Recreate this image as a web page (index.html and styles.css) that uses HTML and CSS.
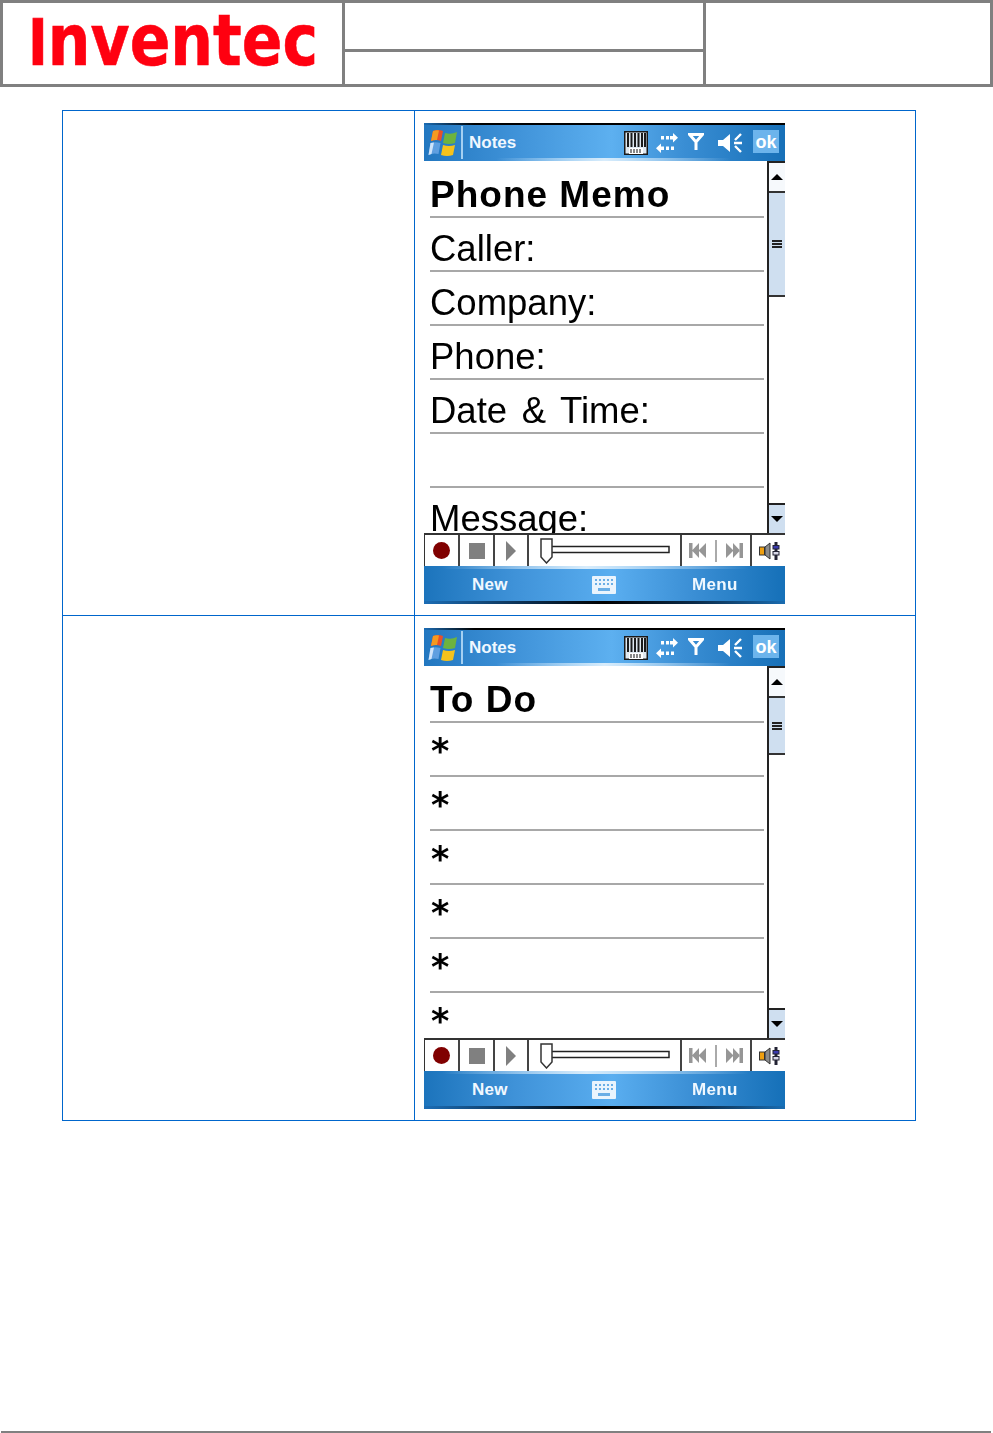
FILE: index.html

```html
<!DOCTYPE html>
<html lang="en">
<head>
    <meta charset="UTF-8">
    <meta name="viewport" content="width=device-width, initial-scale=1.0">
    <title>Inventec - Notes templates</title>
    <link rel="stylesheet" href="styles.css">
</head>
<body>
    <!-- Shared icons for the two phone screens -->
    <svg class="icon-defs" aria-hidden="true">
        <symbol id="i-flag" viewBox="0 0 30 30">
            <path d="M5 3 Q10 1 15 3 L13 13 Q8 11 3 13 Z" fill="#e8502a"/>
            <path d="M5 3 Q8 2 11 2.500 L9 12 Q6 11.500 3 13 Z" fill="#f59a20"/>
            <path d="M17 5 Q23 7 29 4 L27 15 Q21 17 15 15 Z" fill="#6db33f"/>
            <path d="M2.500 15 Q7 13.500 12.500 15 L10.500 26 Q5 24.500 0.500 27 Z" fill="#5f9fe0"/>
            <path d="M2.500 15 L6 14.500 L3.500 26 L0.500 27 Z" fill="#cfe4fa"/>
            <path d="M15 17 Q21 19 27 17 L25 27 Q19 29 13 27 Z" fill="#f6c21c"/>
        </symbol>
        <symbol id="i-barcode" viewBox="0 0 24 24">
            <rect x="0.750" y="0.750" width="22.500" height="22.500" fill="#dfe8f0" stroke="#1a1a1a" stroke-width="1.500"/>
            <path d="M4 2v14M7.500 2v14M11 2v14M14.500 2v14M18 2v14M21 2v14" stroke="#1a1a1a" stroke-width="2"/>
            <rect x="5" y="17" width="14" height="6" fill="#fff"/>
            <path d="M7 18v4M10 18v4M13 18v4M16 18v4" stroke="#111"/>
        </symbol>
        <symbol id="i-sync" viewBox="0 0 22 20">
            <g fill="#fff">
                <path d="M5 3h3v3.500H5zM10 3h3v3.500h-3zM14 3h3V0l5 4.750-5 4.750V6.500h-3z"/>
                <path d="M10 13.500h3v3.500h-3zM15 13.500h3v3.500h-3zM8 13.500v3.500H5V20L0 15.250 5 10.500v3z"/>
            </g>
        </symbol>
        <symbol id="i-antenna" viewBox="0 0 16 17">
            <path d="M1.500 1.500h13L8 9zM8 9v8" fill="none" stroke="#fff" stroke-width="3"/>
        </symbol>
        <symbol id="i-mute" viewBox="0 0 24 20">
            <path d="M0 7h5l7-6v18l-7-6H0z" fill="#fff"/>
            <path d="M23 1l-6 6M16 10h8M17 13l6 6" stroke="#fff" stroke-width="2.400" fill="none"/>
        </symbol>
        <symbol id="i-keyboard" viewBox="0 0 24 18">
            <rect width="24" height="18" rx="1" fill="#eaf4fd"/>
            <path d="M3 3h2v2H3zM7 3h2v2H7zM11 3h2v2h-2zM15 3h2v2h-2zM19 3h2v2h-2zM3 7h2v2H3zM7 7h2v2H7zM11 7h2v2h-2zM15 7h2v2h-2zM19 7h2v2h-2zM6 12h12v3H6z" fill="#6aaee6"/>
        </symbol>
        <symbol id="i-slider" viewBox="0 0 130 26">
            <rect x="10" y="8.500" width="119" height="6" fill="#fff" stroke="#222" stroke-width="1.500"/>
            <path d="M1 1h11v18l-5.500 6L1 19z" fill="#fff" stroke="#333" stroke-width="1.500"/>
        </symbol>
        <symbol id="i-prev" viewBox="0 0 17 17">
            <path d="M0 1h3.500v15H0zM10 1v15L3 8.500zM17 1v15L9.500 8.500z" fill="#969696"/>
        </symbol>
        <symbol id="i-next" viewBox="0 0 17 17">
            <path d="M0 1v15l7.500-7.500zM7 1v15l7-7.500zM13.500 1H17v15h-3.500z" fill="#969696"/>
        </symbol>
        <symbol id="i-volume" viewBox="0 0 22 18">
            <rect x="0.500" y="5" width="5" height="8" fill="#f0a010" stroke="#333"/>
            <path d="M6 5l5-4v16l-5-4z" fill="#8c8c8c" stroke="#333"/>
            <path d="M17 0v18" stroke="#223" stroke-width="3"/>
            <rect x="14" y="3.500" width="6" height="3.500" fill="#3a3ab0" stroke="#223"/>
            <rect x="14" y="9.500" width="6" height="3.500" fill="#d8d8e8" stroke="#223"/>
        </symbol>
    </svg>

    <div class="page">
        <!-- Document header -->
        <header class="doc-header">
            <div class="logo-cell">
                <svg class="logo" viewBox="0 0 285 47" role="img" aria-label="Inventec">
                    <text class="logo-text" x="-3" y="47" textLength="290" lengthAdjust="spacingAndGlyphs"><tspan class="logo-cap">I</tspan>nventec</text>
                </svg>
            </div>
            <div class="title-cell"></div>
            <div class="rev-cell"></div>
            <div class="sub-cell"></div>
        </header>

        <!-- Template table -->
        <main class="template-table">
            <div class="label-cell"></div>
            <div class="shot-cell">
                <div class="screen">
                    <div class="status">
                        <svg class="flag"><use href="#i-flag"/></svg>
                        <span class="status-sep"></span>
                        <span class="app-title">Notes</span>
                        <svg class="ic-barcode"><use href="#i-barcode"/></svg>
                        <svg class="ic-sync"><use href="#i-sync"/></svg>
                        <svg class="ic-antenna"><use href="#i-antenna"/></svg>
                        <svg class="ic-mute"><use href="#i-mute"/></svg>
                        <span class="ok-btn">ok</span>
                    </div>
                    <div class="note-area">
                        <div class="note-lines">
                            <div class="note-row note-head">Phone Memo</div>
                            <div class="note-row">Caller:</div>
                            <div class="note-row">Company:</div>
                            <div class="note-row">Phone:</div>
                            <div class="note-row">Date &amp; Time:</div>
                            <div class="note-row"></div>
                            <div class="note-row">Message:</div>
                        </div>
                        <div class="scrollbar">
                            <div class="sb-up"></div>
                            <div class="sb-thumb sb-thumb-long"><span class="sb-grip"></span></div>
                            <div class="sb-track"></div>
                            <div class="sb-down"></div>
                        </div>
                    </div>
                    <div class="player">
                        <div class="pl-cell"><span class="pl-record"></span></div>
                        <div class="pl-cell"><span class="pl-stop"></span></div>
                        <div class="pl-cell pl-third"><span class="pl-play"></span></div>
                        <div class="pl-cell pl-seek"><svg class="ic-slider"><use href="#i-slider"/></svg></div>
                        <div class="pl-cell pl-skip">
                            <svg class="ic-skip"><use href="#i-prev"/></svg>
                            <span class="pl-skip-sep"></span>
                            <svg class="ic-skip"><use href="#i-next"/></svg>
                        </div>
                        <div class="pl-cell pl-last"><svg class="ic-volume"><use href="#i-volume"/></svg></div>
                    </div>
                    <div class="softbar">
                        <span class="soft-left">New</span>
                        <svg class="ic-keyboard"><use href="#i-keyboard"/></svg>
                        <span class="soft-right">Menu</span>
                    </div>
                </div>
            </div>

            <div class="label-cell row-two"></div>
            <div class="shot-cell row-two">
                <div class="screen">
                    <div class="status">
                        <svg class="flag"><use href="#i-flag"/></svg>
                        <span class="status-sep"></span>
                        <span class="app-title">Notes</span>
                        <svg class="ic-barcode"><use href="#i-barcode"/></svg>
                        <svg class="ic-sync"><use href="#i-sync"/></svg>
                        <svg class="ic-antenna"><use href="#i-antenna"/></svg>
                        <svg class="ic-mute"><use href="#i-mute"/></svg>
                        <span class="ok-btn">ok</span>
                    </div>
                    <div class="note-area">
                        <div class="note-lines">
                            <div class="note-row note-head">To Do</div>
                            <div class="note-row note-star">*</div>
                            <div class="note-row note-star">*</div>
                            <div class="note-row note-star">*</div>
                            <div class="note-row note-star">*</div>
                            <div class="note-row note-star">*</div>
                            <div class="note-row note-star">*</div>
                        </div>
                        <div class="scrollbar">
                            <div class="sb-up"></div>
                            <div class="sb-thumb sb-thumb-short"><span class="sb-grip"></span></div>
                            <div class="sb-track"></div>
                            <div class="sb-down"></div>
                        </div>
                    </div>
                    <div class="player">
                        <div class="pl-cell"><span class="pl-record"></span></div>
                        <div class="pl-cell"><span class="pl-stop"></span></div>
                        <div class="pl-cell pl-third"><span class="pl-play"></span></div>
                        <div class="pl-cell pl-seek"><svg class="ic-slider"><use href="#i-slider"/></svg></div>
                        <div class="pl-cell pl-skip">
                            <svg class="ic-skip"><use href="#i-prev"/></svg>
                            <span class="pl-skip-sep"></span>
                            <svg class="ic-skip"><use href="#i-next"/></svg>
                        </div>
                        <div class="pl-cell pl-last"><svg class="ic-volume"><use href="#i-volume"/></svg></div>
                    </div>
                    <div class="softbar">
                        <span class="soft-left">New</span>
                        <svg class="ic-keyboard"><use href="#i-keyboard"/></svg>
                        <span class="soft-right">Menu</span>
                    </div>
                </div>
            </div>
        </main>

        <footer class="doc-footer"></footer>
    </div>
</body>
</html>
```

FILE: styles.css

```css
/* Resetting default styles */
* {
    margin: 0;
    padding: 0;
    box-sizing: border-box;
}

body {
    background: #fff;
    font-family: "Liberation Sans", Arial, sans-serif;
}

.icon-defs {
    display: none;
}

.page {
    display: flex;
    flex-direction: column;
    min-height: 100vh;
}

/* Document header */
.doc-header {
    display: grid;
    grid-template-columns: 339px 361px 1fr;
    grid-template-rows: 49px 32px;
    height: 87px;
    border: 3px solid #808080;
}

.logo-cell {
    grid-row: 1 / 3;
    padding: 15px 0 0 28px;
}

.logo {
    display: block;
    width: 285px;
    height: 47px;
    overflow: visible;
}

.logo-text {
    font-family: "DejaVu Sans", sans-serif;
    font-weight: 700;
    font-size: 72px;
    fill: #ff0010;
    stroke: #ff0010;
    stroke-width: 0.6px;
}

.logo-cap {
    font-size: 64px;
}

.title-cell {
    border-left: 3px solid #808080;
    border-bottom: 3px solid #808080;
}

.rev-cell {
    grid-column: 3;
    grid-row: 1 / 3;
    border-left: 3px solid #808080;
}

.sub-cell {
    grid-column: 2;
    grid-row: 2;
    border-left: 3px solid #808080;
}

/* Table of screenshots */
.template-table {
    display: grid;
    grid-template-columns: 352px 1fr;
    grid-template-rows: 504px 505px;
    width: 854px;
    margin: 23px 0 0 62px;
    border: 1px solid #0066cc;
}

.label-cell {
    border-right: 1px solid #0066cc;
}

.shot-cell {
    padding: 12px 0 0 9px;
}

.row-two {
    border-top: 1px solid #0066cc;
}

/* Phone screen */
.screen {
    display: flex;
    flex-direction: column;
    width: 361px;
    height: 481px;
    filter: blur(0.35px);
}

.status {
    display: flex;
    align-items: center;
    flex: none;
    height: 38px;
    padding-top: 1px;
    background:
        linear-gradient(90deg, #1c6db5 0, #000 14%, #000 100%) top / 100% 2px no-repeat,
        linear-gradient(90deg, transparent 20%, #d8ecfb 50%, transparent 85%) bottom / 100% 3px no-repeat,
        linear-gradient(90deg, #2277c0 0, #3f92d8 25%, #5db0f0 52%, #3a8ed4 72%, #1770b8 100%);
}

.flag {
    width: 30px;
    height: 30px;
    margin-left: 4px;
}

.status-sep {
    width: 2px;
    height: 33px;
    margin-left: 3px;
    background: #a5d0f2;
}

.app-title {
    flex: 1;
    margin-left: 6px;
    color: #f0f8ff;
    font-size: 17px;
    font-weight: bold;
}

.ic-barcode {
    width: 24px;
    height: 24px;
}

.ic-sync {
    width: 22px;
    height: 20px;
    margin-left: 8px;
}

.ic-antenna {
    width: 16px;
    height: 17px;
    margin: -3px 0 0 10px;
}

.ic-mute {
    width: 24px;
    height: 20px;
    margin-left: 14px;
}

.ok-btn {
    width: 26px;
    height: 23px;
    margin: -2px 6px 0 11px;
    background: #6cb4ec;
    color: #fff;
    font-size: 18px;
    font-weight: bold;
    line-height: 25px;
    text-align: center;
}

/* Note body and scrollbar */
.note-area {
    display: flex;
    flex: none;
    height: 372px;
    overflow: hidden;
}

.note-lines {
    flex: 1;
    padding: 3px 3px 0 6px;
    overflow: hidden;
}

.note-row {
    height: 54px;
    border-bottom: 2px solid #a8a8a8;
    color: #000;
    font-size: 36.500px;
    line-height: 61px;
    word-spacing: 4.500px;
    white-space: nowrap;
}

.note-head {
    font-size: 37px;
    font-weight: bold;
    letter-spacing: 1px;
    word-spacing: 0;
}

.note-star {
    font-family: "DejaVu Sans", sans-serif;
    font-size: 35px;
    font-weight: bold;
    line-height: 56px;
    padding-left: 1px;
}

.scrollbar {
    display: flex;
    flex-direction: column;
    flex: none;
    width: 18px;
    border-left: 2px solid #222;
    border-top: 2px solid #222;
}

.sb-up,
.sb-down {
    display: flex;
    align-items: center;
    justify-content: center;
    flex: none;
    height: 28px;
}

.sb-up {
    background: #f6f9fc;
}

.sb-up::before {
    content: "";
    border: 6px solid transparent;
    border-top: none;
    border-bottom-color: #000;
}

.sb-down {
    height: 30px;
    background: #cfdff0;
    border-top: 2px solid #222;
}

.sb-down::before {
    content: "";
    border: 6px solid transparent;
    border-bottom: none;
    border-top-color: #000;
}

.sb-thumb {
    display: flex;
    align-items: center;
    justify-content: center;
    flex: none;
    background: #cfdff0;
    border-top: 2px solid #333;
    border-bottom: 2px solid #333;
}

.sb-thumb-long {
    height: 106px;
}

.sb-thumb-short {
    height: 59px;
}

.sb-grip {
    width: 10px;
    height: 8px;
    border-top: 2px solid #222;
    border-bottom: 2px solid #222;
    background: linear-gradient(#222, #222) center / 100% 2px no-repeat;
}

.sb-track {
    flex: 1;
    background: #fff;
}

/* Voice recorder toolbar */
.player {
    display: flex;
    flex: none;
    height: 33px;
    border-top: 2px solid #333;
    border-left: 1px solid #333;
    background: #fff;
}

.pl-cell {
    display: flex;
    align-items: center;
    justify-content: center;
    width: 35px;
    height: 31px;
    border-right: 2px solid #444;
}

.pl-third {
    width: 34px;
}

.pl-seek {
    width: 153px;
    justify-content: flex-start;
    padding-left: 11px;
}

.pl-skip {
    width: 70px;
    gap: 9px;
}

.pl-last {
    width: 33px;
    border-right: none;
    padding-left: 2px;
}

.pl-record {
    width: 17px;
    height: 17px;
    border-radius: 50%;
    background: #800000;
}

.pl-stop {
    width: 16px;
    height: 16px;
    background: #808080;
}

.pl-play {
    border-left: 10px solid #808080;
    border-top: 10px solid transparent;
    border-bottom: 10px solid transparent;
}

.ic-slider {
    width: 130px;
    height: 26px;
}

.ic-skip {
    width: 17px;
    height: 17px;
}

.pl-skip-sep {
    width: 2px;
    height: 22px;
    background: #aaa;
}

.ic-volume {
    width: 22px;
    height: 18px;
}

/* Soft key bar */
.softbar {
    display: flex;
    align-items: center;
    flex: none;
    height: 38px;
    color: #f0f8ff;
    font-size: 17px;
    font-weight: bold;
    letter-spacing: 0.3px;
    background:
        linear-gradient(90deg, #1c6db5 0, #0a2a48 30%, #000 50%, #0a2a48 75%, #1a6cb0 100%) bottom / 100% 3px no-repeat,
        linear-gradient(90deg, transparent 5%, #d8ecfb 45%, transparent 90%) top / 100% 3px no-repeat,
        linear-gradient(90deg, #1c74bc 0, #3f92d8 25%, #5aaef0 52%, #3a8ed4 75%, #1570b8 100%);
}

.soft-left {
    width: 168px;
    padding-left: 48px;
}

.ic-keyboard {
    width: 24px;
    height: 18px;
}

.soft-right {
    padding-left: 76px;
}

/* Page footer rule */
.doc-footer {
    height: 2px;
    margin: auto 2px 0 1px;
    background: #808080;
}
```
